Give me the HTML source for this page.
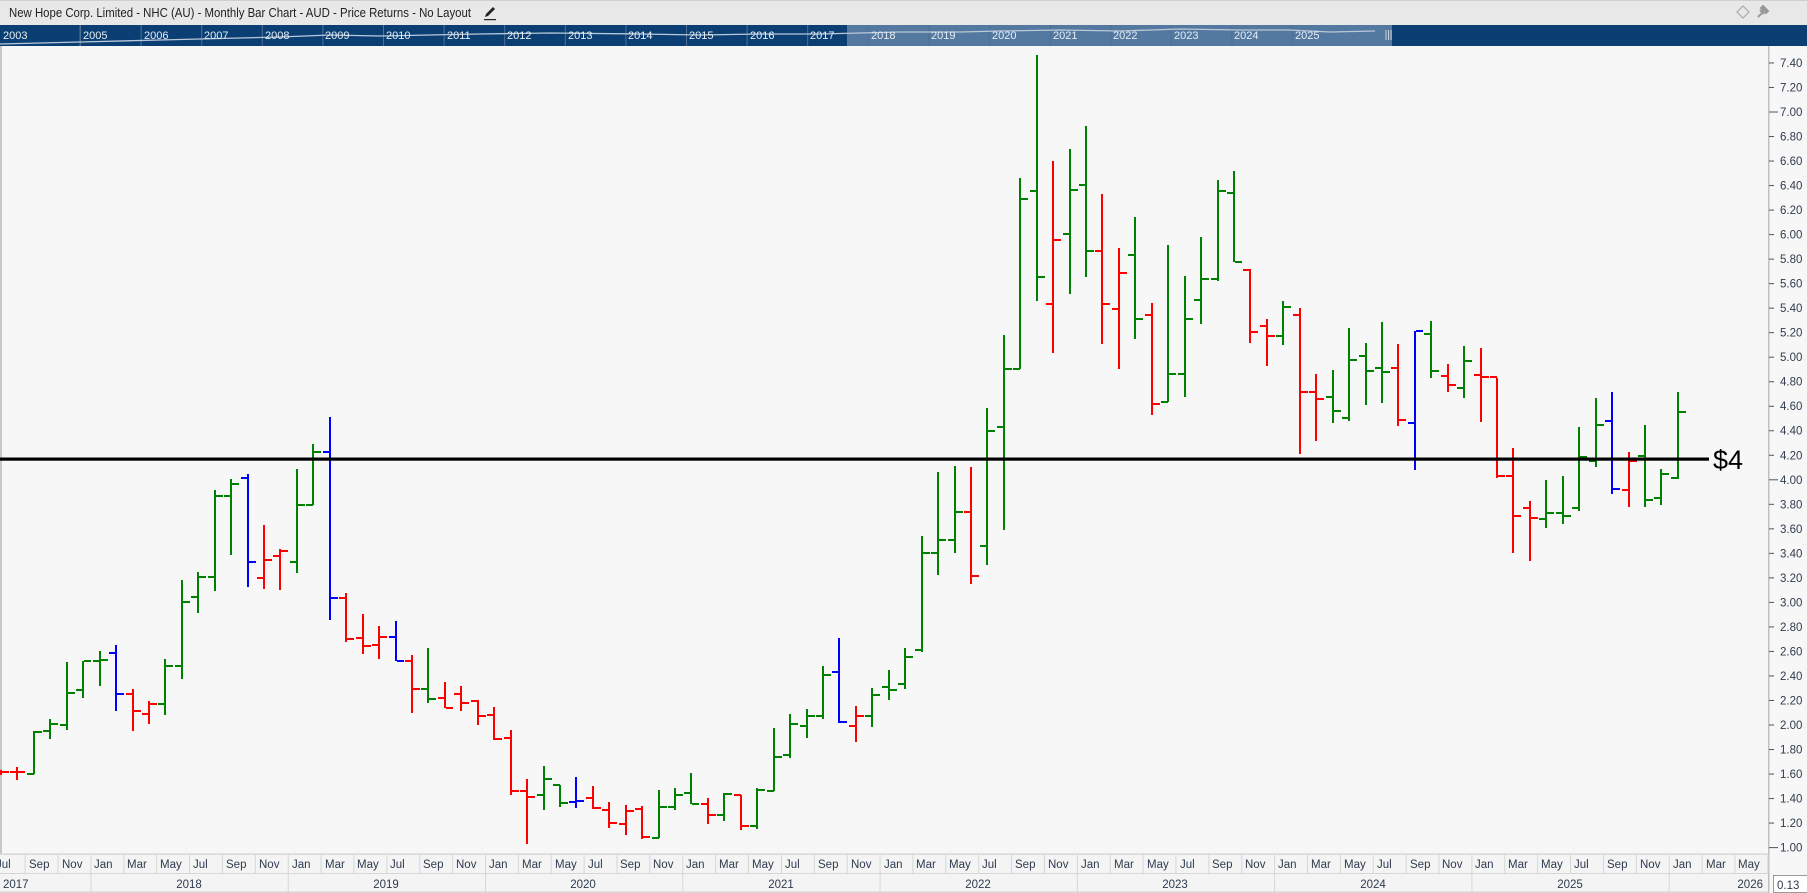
<!DOCTYPE html>
<html><head><meta charset="utf-8">
<style>
html,body{margin:0;padding:0;background:#f7f7f7;width:1807px;height:893px;overflow:hidden}
svg{display:block}
text{font-family:"Liberation Sans",sans-serif}
</style></head>
<body>
<svg id="s" width="1807" height="893" viewBox="0 0 1807 893" xmlns="http://www.w3.org/2000/svg">
<rect x="0" y="0" width="1807" height="25" fill="#e8e8e8"/>
<rect x="0" y="0" width="1807" height="1" fill="#cfcfcf"/>
<text x="9" y="17" font-size="12.5" fill="#222" textLength="462" lengthAdjust="spacingAndGlyphs">New Hope Corp. Limited - NHC (AU) - Monthly Bar Chart - AUD - Price Returns - No Layout</text>
<g transform="translate(482,5)">
<path d="M3 12 L4 9 L11 2 L13 4 L6 11 Z" fill="#222"/>
<rect x="2" y="14" width="12" height="1.2" fill="#222"/>
</g>
<path d="M1743 6 L1749 12 L1743 18 L1737 12 Z" fill="none" stroke="#aaa" stroke-width="1.2"/>
<path d="M1758 17 L1762 13 M1761 8 L1766 13 L1768 11 L1763 6 Z M1760 10 L1764 14" stroke="#999" stroke-width="2" fill="#999"/>
<rect x="0" y="25" width="1807" height="21" fill="#0b3f73"/>
<rect x="847" y="25" width="545" height="21" fill="#5479a0"/>
<g id="navsep" stroke="#4f6f95" stroke-width="1"></g>
<polyline points="0,44 80,42 160,40 240,38 280,37 330,35 380,36 430,35 480,34 550,33 640,34 700,35 760,34 820,34 900,32 960,32 1000,31 1060,30 1120,31 1180,29 1240,30 1290,30 1330,32 1375,31" fill="none" stroke="#b9c8d8" stroke-width="1.3"/>
<g font-size="11" fill="#e6edf5">
<text x="3" y="39">2003</text><text x="83" y="39">2005</text><text x="144" y="39">2006</text><text x="204" y="39">2007</text><text x="265" y="39">2008</text><text x="325" y="39">2009</text><text x="386" y="39">2010</text><text x="447" y="39">2011</text><text x="507" y="39">2012</text><text x="568" y="39">2013</text><text x="628" y="39">2014</text><text x="689" y="39">2015</text><text x="750" y="39">2016</text><text x="810" y="39">2017</text><text x="871" y="39">2018</text><text x="931" y="39">2019</text><text x="992" y="39">2020</text><text x="1053" y="39">2021</text><text x="1113" y="39">2022</text><text x="1174" y="39">2023</text><text x="1234" y="39">2024</text><text x="1295" y="39">2025</text>
</g>
<g stroke="#c8d2dc" stroke-width="1"><line x1="1386" y1="30" x2="1386" y2="40"/><line x1="1388.5" y1="30" x2="1388.5" y2="40"/><line x1="1391" y1="30" x2="1391" y2="40"/></g>
<rect x="0" y="46" width="1769" height="808" fill="#f7f7f7"/>
<rect x="0" y="46" width="2" height="808" fill="#c8c8c8"/>
<rect x="1769" y="46" width="38" height="808" fill="#f7f7f7"/>
<rect x="1768" y="46" width="1.5" height="847" fill="#c0c0c0"/>
<g id="bars"></g>
<rect x="0" y="457.5" width="1709" height="3.2" fill="#000"/>
<text x="1713" y="469" font-size="27" fill="#000">$4</text>
<g id="pticks" stroke="#555" stroke-width="1"></g>
<g font-size="11.5" fill="#2e3b4e">
<text x="1780" y="67">7.40</text><text x="1780" y="91.5">7.20</text><text x="1780" y="116">7.00</text><text x="1780" y="140.5">6.80</text><text x="1780" y="165">6.60</text><text x="1780" y="189.6">6.40</text><text x="1780" y="214.1">6.20</text><text x="1780" y="238.6">6.00</text><text x="1780" y="263.1">5.80</text><text x="1780" y="287.6">5.60</text><text x="1780" y="312.2">5.40</text><text x="1780" y="336.7">5.20</text><text x="1780" y="361.2">5.00</text><text x="1780" y="385.7">4.80</text><text x="1780" y="410.2">4.60</text><text x="1780" y="434.7">4.40</text><text x="1780" y="459.3">4.20</text><text x="1780" y="483.8">4.00</text><text x="1780" y="508.3">3.80</text><text x="1780" y="532.8">3.60</text><text x="1780" y="557.3">3.40</text><text x="1780" y="581.8">3.20</text><text x="1780" y="606.4">3.00</text><text x="1780" y="630.9">2.80</text><text x="1780" y="655.4">2.60</text><text x="1780" y="679.9">2.40</text><text x="1780" y="704.4">2.20</text><text x="1780" y="729">2.00</text><text x="1780" y="753.5">1.80</text><text x="1780" y="778">1.60</text><text x="1780" y="802.5">1.40</text><text x="1780" y="827">1.20</text><text x="1780" y="851.6">1.00</text>
</g>
<rect x="0" y="854" width="1768" height="39" fill="#f4f4f4"/>
<rect x="0" y="853.5" width="1768" height="1.2" fill="#cfcfcf"/>
<rect x="0" y="873" width="1768" height="1" fill="#d6d6d6"/>
<rect x="0" y="891.5" width="1768" height="1.5" fill="#d6d6d6"/>
<g id="msep" stroke="#d6d6d6" stroke-width="1"></g>
<svg x="0" y="854" width="1768" height="39" overflow="hidden">
<g font-size="11.5" fill="#2e3b4e">
<text x="-4" y="14">Jul</text><text x="29" y="14">Sep</text><text x="62" y="14">Nov</text><text x="94" y="14">Jan</text><text x="127" y="14">Mar</text><text x="160" y="14">May</text><text x="193" y="14">Jul</text><text x="226" y="14">Sep</text><text x="259" y="14">Nov</text><text x="292" y="14">Jan</text><text x="325" y="14">Mar</text><text x="357" y="14">May</text><text x="390" y="14">Jul</text><text x="423" y="14">Sep</text><text x="456" y="14">Nov</text><text x="489" y="14">Jan</text><text x="522" y="14">Mar</text><text x="555" y="14">May</text><text x="588" y="14">Jul</text><text x="620" y="14">Sep</text><text x="653" y="14">Nov</text><text x="686" y="14">Jan</text><text x="719" y="14">Mar</text><text x="752" y="14">May</text><text x="785" y="14">Jul</text><text x="818" y="14">Sep</text><text x="851" y="14">Nov</text><text x="884" y="14">Jan</text><text x="916" y="14">Mar</text><text x="949" y="14">May</text><text x="982" y="14">Jul</text><text x="1015" y="14">Sep</text><text x="1048" y="14">Nov</text><text x="1081" y="14">Jan</text><text x="1114" y="14">Mar</text><text x="1147" y="14">May</text><text x="1180" y="14">Jul</text><text x="1212" y="14">Sep</text><text x="1245" y="14">Nov</text><text x="1278" y="14">Jan</text><text x="1311" y="14">Mar</text><text x="1344" y="14">May</text><text x="1377" y="14">Jul</text><text x="1410" y="14">Sep</text><text x="1442" y="14">Nov</text><text x="1475" y="14">Jan</text><text x="1508" y="14">Mar</text><text x="1541" y="14">May</text><text x="1574" y="14">Jul</text><text x="1607" y="14">Sep</text><text x="1640" y="14">Nov</text><text x="1673" y="14">Jan</text><text x="1706" y="14">Mar</text><text x="1738" y="14">May</text><text x="1771" y="14">Jul</text>
<text x="3" y="34">2017</text>
<text x="189" y="34" text-anchor="middle">2018</text><text x="386" y="34" text-anchor="middle">2019</text><text x="583" y="34" text-anchor="middle">2020</text><text x="781" y="34" text-anchor="middle">2021</text><text x="978" y="34" text-anchor="middle">2022</text><text x="1175" y="34" text-anchor="middle">2023</text><text x="1373" y="34" text-anchor="middle">2024</text><text x="1570" y="34" text-anchor="middle">2025</text><text x="1763" y="34" text-anchor="end">2026</text>
</g>
</svg>
<rect x="1773.5" y="875.5" width="35" height="17" fill="#fff" stroke="#999" stroke-width="1"/>
<text x="1777" y="889" font-size="11.5" fill="#2e3b4e">0.13</text>
</svg>
<script>
var NS="http://www.w3.org/2000/svg";
function el(p,t,a){var e=document.createElementNS(NS,t);for(var k in a)e.setAttribute(k,a[k]);p.appendChild(e);return e;}
var D=[
[770,775,772,772,'r'],[767,780,772,772,'r'],[731,774,774,732,'g'],[719,739,731,724,'g'],[662,730,725,693,'g'],[661,698,690,661,'g'],[651,686,661,660,'g'],[645,711,653,694,'b'],[689,731,694,711,'r'],[701,724,714,704,'r'],
[659,715,704,666,'g'],[580,679,666,602,'g'],[572,613,597,577,'g'],[490,591,577,496,'g'],[479,555,496,484,'g'],[474,587,478,562,'b'],[525,589,578,560,'r'],[549,590,556,551,'r'],[469,573,562,505,'g'],[444,505,505,452,'g'],
[417,620,452,598,'b'],[593,642,598,639,'r'],[614,654,638,646,'r'],[626,659,645,637,'r'],[621,661,637,661,'b'],[655,713,661,689,'r'],[648,703,689,699,'g'],[682,708,698,708,'r'],[686,711,694,703,'r'],[700,725,701,716,'r'],
[707,740,715,739,'r'],[730,795,738,791,'r'],[779,844,791,797,'r'],[766,810,795,779,'g'],[785,807,785,803,'g'],[777,808,802,801,'b'],[786,809,798,808,'r'],[802,828,810,823,'r'],[805,835,824,811,'r'],[806,839,809,837,'r'],
[790,838,838,807,'g'],[788,810,807,795,'g'],[773,804,793,804,'g'],[798,824,804,815,'r'],[793,821,815,794,'g'],[795,830,795,826,'r'],[788,829,826,790,'g'],[728,791,791,757,'g'],[714,758,755,724,'g'],[709,738,726,716,'g'],
[666,719,716,675,'g'],[638,723,672,722,'b'],[706,742,726,716,'r'],[688,727,716,695,'g'],[670,700,687,690,'g'],[648,689,684,657,'g'],[536,652,650,553,'g'],[472,575,553,540,'g'],[466,553,540,512,'g'],[467,584,512,576,'r'],
[408,565,546,431,'g'],[335,530,427,369,'g'],[178,369,369,199,'g'],[55,301,191,277,'g'],[161,353,304,240,'r'],[149,294,234,190,'g'],[126,277,185,251,'g'],[194,344,251,304,'r'],[248,369,309,273,'r'],[217,339,255,319,'g'],
[303,415,315,404,'r'],[245,402,402,374,'g'],[276,397,374,319,'g'],[237,324,300,279,'g'],[180,281,279,191,'g'],[171,262,193,262,'g'],[269,343,270,332,'r'],[319,366,326,336,'r'],[301,345,336,307,'g'],[308,454,315,392,'r'],
[374,441,392,399,'r'],[370,423,397,411,'g'],[328,421,418,360,'g'],[343,405,356,371,'g'],[322,403,368,372,'g'],[344,426,368,420,'r'],[331,470,423,331,'b'],[321,378,334,371,'g'],[364,392,376,385,'r'],[346,398,388,361,'g'],
[348,422,375,377,'r'],[378,478,377,476,'r'],[448,553,476,516,'r'],[501,561,508,518,'r'],[480,528,519,513,'g'],[476,524,513,516,'g'],[427,511,508,457,'g'],[398,467,461,425,'g'],[392,494,421,489,'b'],[452,507,490,461,'r'],
[425,507,456,500,'g'],[469,505,498,474,'g'],[392,479,478,412,'g']];
var C={r:'#ff0000',g:'#008000',b:'#0000ff'};
var B=document.getElementById('bars');
D.forEach(function(d,i){var x=Math.round(16.44*i)+1;var c=C[d[4]];
el(B,'rect',{x:x-1,y:d[0],width:2,height:d[1]-d[0],fill:c});
el(B,'rect',{x:x-7,y:d[2]-1,width:7,height:2,fill:c});
el(B,'rect',{x:x+1,y:d[3]-1,width:7,height:2,fill:c});});
var P=document.getElementById('pticks');
for(var k=0;k<=32;k++){var y=112+(7-(1+k*0.2))*122.6;var major=(k==0||k==15||k==30);el(P,'line',{x1:1769,x2:major?1778:1774,y1:y,y2:y});}
var M=document.getElementById('msep');
for(var i=2;i<=108;i+=2){var x=16.44*i-8.2+0.5;el(M,'line',{x1:x,x2:x,y1:855,y2:873});}
for(var i=6;i<=102;i+=12){var x=16.44*i-8.2+0.5;el(M,'line',{x1:x,x2:x,y1:873,y2:892});}
var N=document.getElementById('navsep');
el(N,'line',{x1:80,x2:80,y1:25,y2:46});
for(var k=0;k<=20;k++){var x=80+k*60.6+0.5;el(N,'line',{x1:x,x2:x,y1:25,y2:46});}
</script>
</body></html>
